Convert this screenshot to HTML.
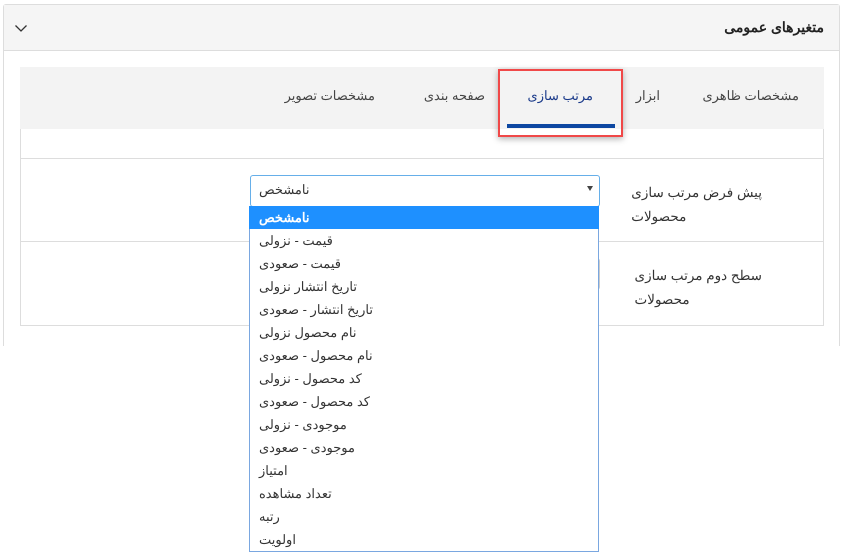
<!DOCTYPE html>
<html><head><meta charset="utf-8"><style>
*{margin:0;padding:0;box-sizing:border-box}
body{width:842px;height:554px;background:#fff;position:relative;overflow:hidden;font-family:"Liberation Sans","Noto Sans CJK SC",sans-serif;font-size:13px;color:#333}
.a{position:absolute}
.t{position:absolute;white-space:nowrap;direction:rtl}
</style></head><body>
<div class="a" style="left:3px;top:4px;width:837px;height:342px;border:1px solid #ddd;border-bottom:none;border-radius:3px 3px 0 0"></div>
<div class="a" style="left:4px;top:5px;width:835px;height:46px;background:#f5f5f5;border-bottom:1px solid #ddd"></div>
<div class="t" style="right:18px;top:19px;font-weight:bold;font-size:14px;color:#222">متغیرهای عمومی</div>
<svg class="a" style="left:14px;top:24px" width="14" height="9" viewBox="0 0 14 9"><path d="M1.5 1.5L7 7L12.5 1.5" stroke="#333" stroke-width="1.3" fill="none"/></svg>

<div class="a" style="left:20px;top:67px;width:804px;height:62px;background:#f3f3f3"></div>
<div class="t" style="right:43px;top:88px;color:#444">مشخصات ظاهری</div>
<div class="t" style="right:182px;top:88px;color:#444">ابزار</div>
<div class="t" style="right:249px;top:88px;color:#1a3a8a">مرتب سازی</div>
<div class="t" style="right:357px;top:88px;color:#444">صفحه بندی</div>
<div class="t" style="right:467px;top:88px;color:#444">مشخصات تصویر</div>
<div class="a" style="left:507px;top:124px;width:108px;height:4px;background:#0d47a1"></div>
<div class="a" style="left:498px;top:69px;width:125px;height:68px;border:2px solid #f04848;box-shadow:0 2px 6px rgba(0,0,0,.3)"></div>

<div class="a" style="left:20px;top:129px;width:804px;height:197px;border:1px solid #ddd;border-top:none"></div>
<div class="a" style="left:21px;top:158px;width:802px;height:1px;background:#ddd"></div>
<div class="a" style="left:21px;top:241px;width:802px;height:1px;background:#ddd"></div>
<div class="t" style="right:80px;top:181px;line-height:24px;text-align:left;font-size:13.5px">پیش فرض مرتب سازی<br>محصولات</div>
<div class="t" style="right:80px;top:264px;line-height:24px;text-align:left;font-size:13.5px">سطح دوم مرتب سازی<br>محصولات</div>
<div class="a" style="left:251px;top:258px;width:349px;height:32px;border:1px solid #ccc;border-radius:3px"></div>

<div class="a" style="left:250px;top:175px;width:350px;height:32px;border:1px solid #66afe9;border-radius:3px;background:#fff"></div>
<div class="t" style="left:259px;top:182px">نامشخص</div>
<div class="a" style="left:587px;top:186px;width:0;height:0;border-left:3px solid transparent;border-right:3px solid transparent;border-top:5px solid #444"></div>

<div class="a" style="left:249px;top:206px;width:350px;height:346px;border:1px solid #7aa7e0;background:#fff;border-top:none">
<div style="height:23px;background:#1e90ff;margin:0 -1px"></div>
</div>
<div class="a" style="left:259px;top:206px;line-height:23px;font-size:13px">
<div dir="rtl" style="width:max-content;color:#fff;font-weight:bold">نامشخص</div>
<div dir="rtl" style="width:max-content">قیمت - نزولی</div>
<div dir="rtl" style="width:max-content">قیمت - صعودی</div>
<div dir="rtl" style="width:max-content">تاریخ انتشار نزولی</div>
<div dir="rtl" style="width:max-content">تاریخ انتشار - صعودی</div>
<div dir="rtl" style="width:max-content">نام محصول نزولی</div>
<div dir="rtl" style="width:max-content">نام محصول - صعودی</div>
<div dir="rtl" style="width:max-content">کد محصول - نزولی</div>
<div dir="rtl" style="width:max-content">کد محصول - صعودی</div>
<div dir="rtl" style="width:max-content">موجودی - نزولی</div>
<div dir="rtl" style="width:max-content">موجودی - صعودی</div>
<div dir="rtl" style="width:max-content">امتیاز</div>
<div dir="rtl" style="width:max-content">تعداد مشاهده</div>
<div dir="rtl" style="width:max-content">رتبه</div>
<div dir="rtl" style="width:max-content">اولویت</div>
</div>
</body></html>
